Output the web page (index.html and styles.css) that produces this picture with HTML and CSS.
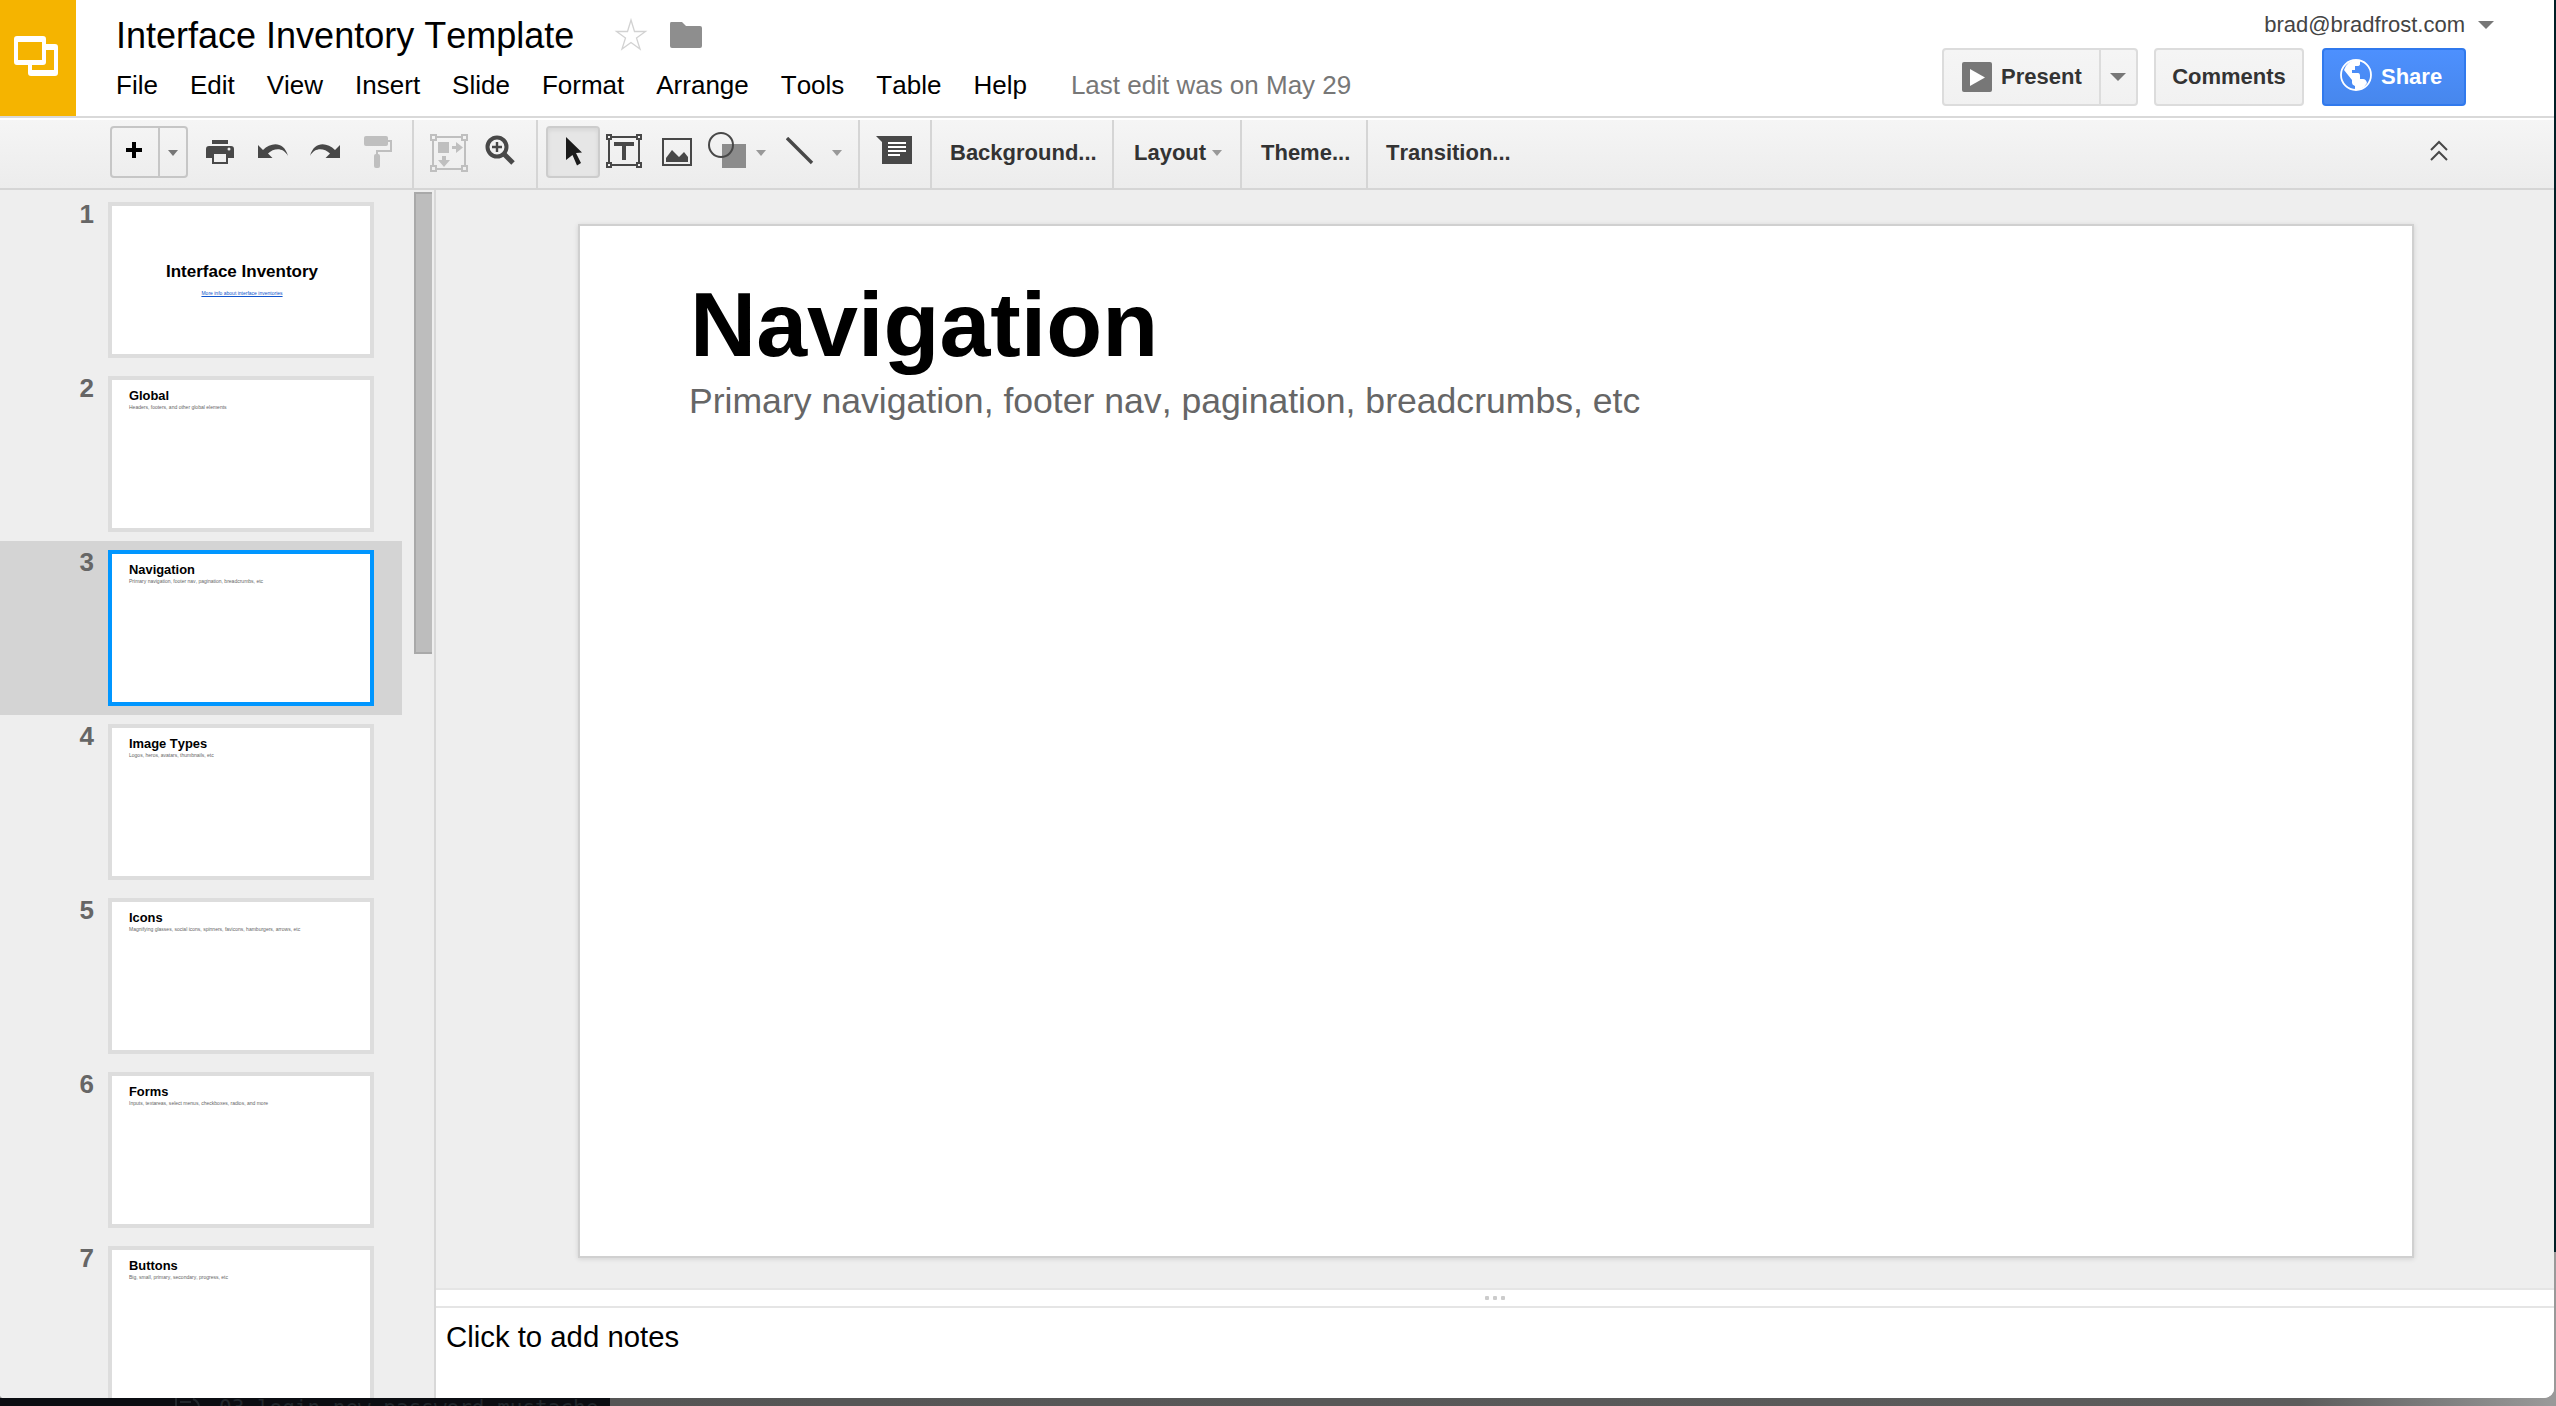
FILE: index.html
```html
<!DOCTYPE html>
<html lang="en">
<head>
<meta charset="utf-8">
<title>Interface Inventory Template</title>
<link rel="stylesheet" href="styles.css">
</head>
<body>
<div class="window">
  <header class="header">
    <div class="logo">
      <svg width="76" height="116"><path fill="#fff" fill-rule="evenodd" d="M17 36h26q3 0 3 3v23q0 3-3 3H17q-3 0-3-3V39q0-3 3-3zM18 42v18h24V42z"/><path fill="#fff" d="M46 44h9q3 0 3 3v26q0 3-3 3H31q-3 0-3-3v-8h4v5h22V50h-8z"/></svg>
    </div>
    <div class="heading">
      <div class="title-row">
        <h1 class="title">Interface Inventory Template</h1>
        <svg class="star" width="34" height="34" viewBox="0 0 34 34"><path d="M17 3l3.500 11.500h11L22.500 21l3.500 11-9-6.500L8 32l3.500-11-9-6.500h11z" fill="#fff" stroke="#d2d2d2" stroke-width="1.300"/></svg>
        <svg class="folder" width="34" height="28" viewBox="0 0 34 28"><path d="M2 1h11l4 4h14q2 0 2 2v18q0 2-2 2H3q-2 0-2-2V3q0-2 1-2z" fill="#8e8e8e"/></svg>
      </div>
      <nav class="menu">
        <span>File</span><span>Edit</span><span>View</span><span>Insert</span><span>Slide</span><span>Format</span><span>Arrange</span><span>Tools</span><span>Table</span><span>Help</span><span class="last-edit">Last edit was on May 29</span>
      </nav>
    </div>
    <div class="account">
      <div class="user">brad@bradfrost.com<svg width="16" height="8"><path d="M0 0h16l-8 8z" fill="#777"/></svg></div>
      <div class="actions">
        <div class="button present">
          <div class="present-main"><svg width="30" height="30"><rect width="30" height="30" rx="2" fill="#777"/><path d="M8 7l15 8.500L8 24z" fill="#fff"/></svg>Present</div>
          <div class="present-more"><svg width="16" height="8"><path d="M0 0h16l-8 8z" fill="#777"/></svg></div>
        </div>
        <div class="button comments">Comments</div>
        <div class="button share"><svg width="32" height="32" viewBox="0 0 32 32"><circle cx="16" cy="16" r="15" fill="none" stroke="#fff" stroke-width="1.800"/><path fill="#fff" d="M20 1v4q0 2-3 2h-2v4h-3v3h6q2 0 2 3v3h3q3 0 4 4l-3 4q-4 3-9 3v-4q-3-1-3-3v-3L4 11Q7 2 16 1z"/></svg>Share</div>
      </div>
    </div>
  </header>

  <div class="toolbar">
    <div class="group group-edit">
      <div class="new-slide"><div class="plus"><svg width="16" height="16"><path d="M6 0h4v6h6v4h-6v6H6v-6H0V6h6z"/></svg></div><div class="new-more"><svg width="10" height="6"><path d="M0 0h10L5 6z" fill="#777"/></svg></div></div>
      <svg width="28" height="24" class="print"><path fill="#484848" d="M6 0h16v4H6zM3 6h22q3 0 3 3v9h-6v6H6v-6H0V9q0-3 3-3zM8 14v8h12v-8z" fill-rule="evenodd"/><circle cx="23" cy="9" r="1.500" fill="#eee"/></svg>
      <svg width="30" height="14" class="undo"><path fill="#484848" d="M0 1l5 5C13-2 26-3 30 12 25 3 16 4 10 9.500l4.500 4.500H0z"/></svg>
      <svg width="30" height="14" class="redo"><path fill="#484848" d="M30 1l-5 5C17-2 4-3 0 12 5 3 14 4 20 9.500L15.500 14H30z"/></svg>
      <svg width="28" height="32" class="roller"><g fill="#bfbfbf"><rect width="24" height="10" rx="2"/><path d="M24 4h4v12H14v2h-2v-4h14V6h-2z"/><rect x="10" y="18" width="6" height="14" rx="2"/></g></svg>
    </div>
    <div class="group group-zoom">
      <svg width="40" height="40" viewBox="0 0 40 40"><g fill="none" stroke="#bfbfbf" stroke-width="2"><path d="M8 4h24M8 36h24M4 8v24M36 8v24"/><path d="M2 2h5v5H2zM33 2h5v5h-5zM2 33h5v5H2zM33 33h5v5h-5z"/></g><path fill="#bfbfbf" d="M9 9h11v11H9zM23 13h4V9l7 5.500-7 5.500v-4h-4zM13 23h4v4h4l-6 7-6-7h4z"/></svg>
      <svg width="30" height="30" class="magnify"><circle cx="12" cy="12" r="9.500" fill="none" stroke="#484848" stroke-width="4"/><path d="M12 7v10M7 12h10" stroke="#484848" stroke-width="2.400"/><path d="M19 19l9 9" stroke="#484848" stroke-width="5"/></svg>
    </div>
    <div class="group group-tools">
      <div class="selected"><svg width="18" height="30"><path fill="#1a1a1a" d="M1 1l16 15.500-6 .5 5 10-4 2.500L7.500 19 1 24z"/></svg></div>
      <svg width="36" height="34" class="textbox"><path d="M6 3h24M6 31h24M3 6v22M33 6v22" stroke="#484848" stroke-width="2"/><path d="M1 1h4v4H1zM31 1h4v4h-4zM1 29h4v4H1zM31 29h4v4h-4z" fill="#f4f4f4" stroke="#484848" stroke-width="2"/><path d="M8 8h20v4h-8v14h-4V12H8z" fill="#484848"/></svg>
      <svg width="30" height="28" class="image"><path d="M1 1h28v26H1z" fill="none" stroke="#484848" stroke-width="2"/><path d="M4 24v-4l6-8 7 7 5-5 4 5v5z" fill="#484848"/></svg>
      <svg width="39" height="36" class="shape"><rect x="14" y="12" width="24" height="24" fill="#8c8c8c"/><circle cx="13" cy="13" r="12" fill="none" stroke="#484848" stroke-width="2"/></svg>
      <svg width="10" height="6" class="caret caret-shape"><path d="M0 0h10L5 6z" fill="#999"/></svg>
      <svg width="28" height="28" class="line"><path d="M1 1l25 25" stroke="#484848" stroke-width="3.400"/></svg>
      <svg width="10" height="6" class="caret caret-line"><path d="M0 0h10L5 6z" fill="#999"/></svg>
    </div>
    <div class="group group-comment"><svg width="36" height="28"><path d="M0 0h36v28H6V6z" fill="#484848"/><path d="M12 7h18M12 11h18M12 15h18M12 19h12" stroke="#fff" stroke-width="2"/></svg></div>
    <div class="group label background">Background...</div>
    <div class="group label layout">Layout<svg width="10" height="6"><path d="M0 0h10L5 6z" fill="#999"/></svg></div>
    <div class="group label theme">Theme...</div>
    <div class="label transition">Transition...</div>
    <svg width="18" height="22" class="collapse"><path d="M1 10l8-8 8 8M1 20l8-8 8 8" fill="none" stroke="#484848" stroke-width="2"/></svg>
  </div>

  <div class="workspace">
    <aside class="filmstrip">
      <div class="slides">
        <div class="slide"><span class="number">1</span><div class="thumb cover"><b>Interface Inventory</b><u>More info about interface inventories</u></div></div>
        <div class="slide"><span class="number">2</span><div class="thumb"><b>Global</b><p>Headers, footers, and other global elements</p></div></div>
        <div class="slide active"><span class="number">3</span><div class="thumb"><b>Navigation</b><p>Primary navigation, footer nav, pagination, breadcrumbs, etc</p></div></div>
        <div class="slide"><span class="number">4</span><div class="thumb"><b>Image Types</b><p>Logos, heros, avatars, thumbnails, etc</p></div></div>
        <div class="slide"><span class="number">5</span><div class="thumb"><b>Icons</b><p>Magnifying glasses, social icons, spinners, favicons, hamburgers, arrows, etc</p></div></div>
        <div class="slide"><span class="number">6</span><div class="thumb"><b>Forms</b><p>Inputs, textareas, select menus, checkboxes, radios, and more</p></div></div>
        <div class="slide"><span class="number">7</span><div class="thumb"><b>Buttons</b><p>Big, small, primary, secondary, progress, etc</p></div></div>
      </div>
      <div class="scrollbar"></div>
    </aside>
    <main class="editor">
      <div class="stage">
        <div class="canvas">
          <h2>Navigation</h2>
          <p>Primary navigation, footer nav, pagination, breadcrumbs, etc</p>
        </div>
      </div>
      <div class="splitter"><i></i><i></i><i></i></div>
      <div class="notes">Click to add notes</div>
    </main>
  </div>
</div>
<div class="behind"><svg width="44" height="8"><path d="M1 0v8M5 4h11M18 1q5 2 6 7" fill="none" stroke="#22282d" stroke-width="2"/></svg>03-login-new-password.mustache</div>
</body>
</html>
```
FILE: styles.css
```css
* { box-sizing: border-box; }
body {
  margin: 0;
  width: 2556px;
  height: 1406px;
  overflow: hidden;
  font-family: "Liberation Sans", Arial, sans-serif;
  font-kerning: none;
  background: linear-gradient(#001f26 0 1252px, #999 1252px);
}
svg { display: block; flex: none; }
.window {
  width: 2554px;
  height: 1398px;
  display: flex;
  flex-direction: column;
  overflow: hidden;
  background: #fff;
  border-radius: 0 0 10px 4px;
}

.header { display: flex; height: 118px; border-bottom: 2px solid #d9d9d9; }
.logo { width: 76px; background: #f5b400; }
.heading { padding-left: 40px; flex: 1; }
.title-row { display: flex; height: 66px; padding-top: 15px; }
.title { margin: 0; font-size: 36px; line-height: 42px; font-weight: 400; width: 458px; white-space: nowrap; }
.star { margin: 2px 0 0 40px; }
.folder { margin: 6px 0 0 21px; }
.menu { display: flex; gap: 32px; font-size: 26px; line-height: 38px; white-space: nowrap; }
.last-edit { color: #777; margin-left: 12px; }

.account { width: 612px; }
.user { display: flex; align-items: center; justify-content: flex-end; gap: 13px; height: 48px; padding: 2px 60px 0 0; font-size: 22px; color: #444; }
.actions { display: flex; }
.button {
  display: flex;
  align-items: center;
  height: 58px;
  border: 2px solid #dcdcdc;
  border-radius: 4px;
  background: linear-gradient(#f5f5f5, #f1f1f1);
  font-size: 22px;
  font-weight: 700;
  color: #333;
}
.present { width: 196px; }
.present-main { display: flex; align-items: center; gap: 9px; width: 157px; height: 100%; padding-left: 18px; border-right: 2px solid #dcdcdc; }
.present-more { padding-left: 9px; }
.comments { width: 150px; margin-left: 16px; justify-content: center; }
.share { width: 144px; margin-left: 18px; padding-left: 16px; gap: 9px; color: #fff; border-color: #3079ed; background: linear-gradient(#4d90fe, #4787ed); }
.share svg { margin-top: -4px; }

.toolbar {
  display: flex;
  height: 72px;
  border-top: 2px solid #fff;
  border-bottom: 2px solid #d5d5d5;
  background: linear-gradient(#f5f5f5, #ececec);
}
.group { display: flex; border-right: 2px solid #d5d5d5; }
.group-edit { width: 414px; padding-left: 110px; }
.new-slide { display: flex; width: 78px; height: 52px; margin-top: 6px; border: 2px solid #c6c6c6; border-radius: 4px; }
.plus { width: 48px; padding: 14px 0 0 14px; border-right: 2px solid #c6c6c6; }
.new-more { padding: 22px 0 0 8px; }
.print { margin: 20px 0 0 18px; }
.undo { margin: 24px 0 0 24px; }
.redo { margin: 24px 0 0 22px; }
.roller { margin: 16px 0 0 24px; }
.group-zoom { width: 124px; padding: 13px 0 0 15px; }
.magnify { margin: 2px 0 0 16px; }
.group-tools { width: 322px; padding-left: 8px; }
.selected { width: 54px; height: 52px; margin-top: 6px; padding: 8px 0 0 17px; border: 2px solid #ccc; border-radius: 4px; background: #e6e6e6; box-shadow: inset 0 2px 4px rgba(0,0,0,.08); }
.textbox { margin: 14px 0 0 6px; }
.image { margin: 18px 0 0 20px; }
.shape { margin: 12px 0 0 16px; }
.caret { margin-top: 30px; }
.caret-shape { margin-left: 9px; }
.line { margin: 17px 0 0 20px; }
.caret-line { margin-left: 18px; }
.group-comment { width: 72px; padding: 16px 0 0 16px; }
.label { font-size: 22px; line-height: 66px; font-weight: 700; color: #333; white-space: nowrap; }
.background { width: 182px; padding-left: 18px; }
.layout { width: 128px; padding-left: 20px; }
.layout svg { margin: 30px 0 0 6px; }
.theme { width: 126px; padding-left: 19px; }
.transition { padding-left: 18px; flex: 1; }
.collapse { margin: 20px 106px 0 0; }

.workspace { display: flex; height: 1208px; background: #eee; }
.filmstrip { display: flex; width: 436px; border-right: 2px solid #d8d8d8; overflow: hidden; }
.slides { width: 402px; padding-top: 3px; }
.slide { display: flex; height: 174px; padding-top: 9px; }
.active { background: #d4d4d4; }
.number { width: 108px; padding-right: 14px; text-align: right; font-size: 26px; line-height: 24px; font-weight: 700; color: #666; }
.thumb { width: 266px; height: 156px; border: 4px solid #ddd; background: #fff; padding: 8px 0 0 17px; white-space: nowrap; }
.active .thumb { border-color: #0096ff; }
.thumb b { display: block; font-size: 12.900px; line-height: 15px; }
.thumb p { margin: 0; font-size: 5.020px; line-height: 8px; color: #666; }
.cover { display: flex; flex-direction: column; align-items: center; padding: 56px 0 0 2px; }
.cover b { font-size: 17px; line-height: 20px; }
.cover u { font-size: 5.020px; line-height: 8px; margin-top: 7px; color: #15c; }
.scrollbar { width: 18px; height: 462px; margin: 2px 0 0 12px; background: #bdbdbd; border: 2px solid #a9a9a9; border-right: 0; }

.editor { flex: 1; display: flex; flex-direction: column; }
.stage { height: 1098px; padding: 34px 0 0 142px; }
.canvas { width: 1836px; height: 1034px; padding: 52px 0 0 110px; border: 2px solid #d0d0d0; background: #fff; box-shadow: 0 1px 5px rgba(0,0,0,.12); white-space: nowrap; }
.canvas h2 { margin: 0; font-size: 91.600px; line-height: 92px; }
.canvas p { margin: 11px 0 0 -1px; font-size: 35.600px; line-height: 40px; color: #666; }
.splitter { display: flex; align-items: center; justify-content: center; gap: 4px; height: 20px; border: solid #e5e5e5; border-width: 2px 0; background: #fff; }
.splitter i { width: 4px; height: 4px; background: #ccc; border-radius: 1px; }
.notes { flex: 1; padding: 10px 0 0 10px; font-size: 29.330px; line-height: 38px; background: #fff; }

.behind {
  display: flex;
  height: 8px;
  overflow: hidden;
  padding-left: 175px;
  font: 21px/20px "DejaVu Sans Mono", monospace;
  color: #22282d;
  background: linear-gradient(90deg, #0b0d12 0 610px, #555 610px, #5c5c5c 2300px, #999 2550px);
}
```
